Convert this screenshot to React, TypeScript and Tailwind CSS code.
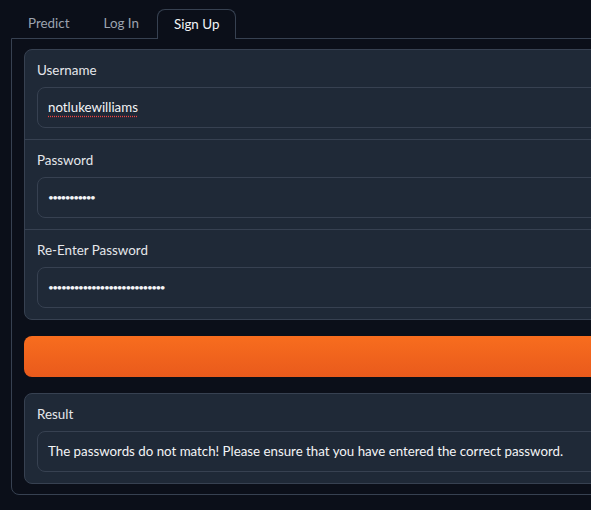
const font = "font-['Lato','Liberation_Sans',sans-serif]";

function Field({ label, children, last }: { label: string; children: React.ReactNode; last?: boolean }) {
  return (
    <div className={`flex flex-col px-3 pt-[10px] pb-[11px] ${last ? "" : "border-b border-[#374151]"}`}>
      <span className="h-5 leading-5 text-[13.4px] text-[#e5e7eb]">{label}</span>
      <div className="mt-[7px] h-[41px] rounded-lg border border-[#374151] bg-[#1f2937] px-[10px] flex items-center text-[13.3px] text-[#f3f4f6]">
        {children}
      </div>
    </div>
  );
}

export default function App() {
  return (
    <div className={`h-[510px] w-full overflow-hidden bg-[#0b0f19] ${font}`}>
      <div className="w-[640px] pt-[9px]">
        <div className="flex gap-[2px] pl-3 h-[29px] relative z-10">
          <button className="px-4 h-[29px] text-[13.4px] text-[#9ca3af]">Predict</button>
          <button className="px-4 h-[29px] text-[13.4px] text-[#9ca3af]">Log In</button>
          <button className="px-4 h-[30px] text-[13.4px] text-[#f3f4f6] rounded-t-lg border border-b-0 border-[#374151] bg-[#0b0f19]">
            Sign Up
          </button>
        </div>
        <div className="ml-[11px] h-[457px] rounded-b-lg border border-[#374151] px-3 pt-[10px] flex flex-col gap-4">
          <div className="rounded-lg border border-[#374151] bg-[#1f2937] flex flex-col">
            <Field label="Username">
              <span className="underline decoration-dotted decoration-[#ef4444] underline-offset-4">notlukewilliams</span>
            </Field>
            <Field label="Password">
              <span className="text-[10px] tracking-[-1.6px]">{"•".repeat(11)}</span>
            </Field>
            <Field label="Re-Enter Password" last>
              <span className="text-[10px] tracking-[-1.5px]">{"•".repeat(27)}</span>
            </Field>
          </div>
          <button className="h-[41px] rounded-lg bg-linear-to-b from-[#f86d1e] to-[#e95a1c]" />
          <div className="rounded-lg border border-[#374151] bg-[#1f2937] flex flex-col">
            <Field label="Result" last>
              The passwords do not match! Please ensure that you have entered the correct password.
            </Field>
          </div>
        </div>
      </div>
    </div>
  );
}
